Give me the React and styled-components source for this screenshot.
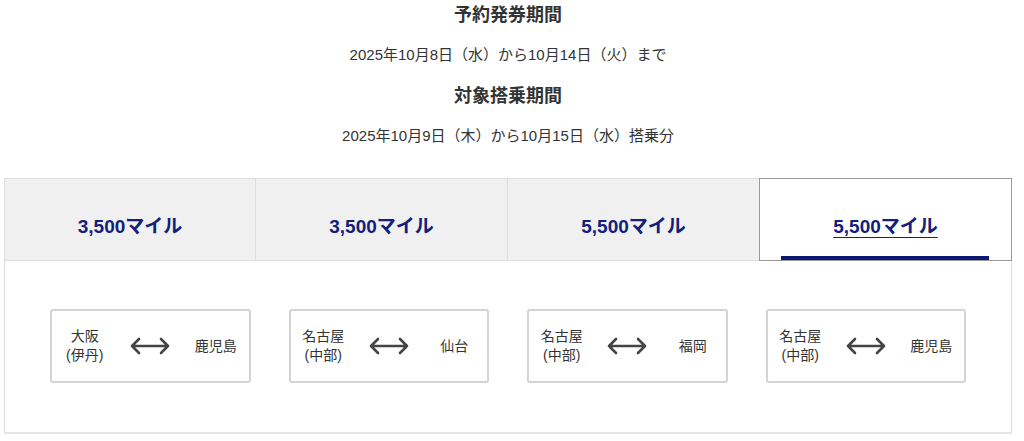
import React from "react";
import styled, { createGlobalStyle } from "styled-components";

const GlobalStyle = createGlobalStyle`
  body {
    margin: 0;
    background: #fff;
    font-family: "Liberation Sans", "Noto Sans CJK JP", sans-serif;
    color: #333;
  }
`;

const Page = styled.div`
  width: 1008px;
  margin-left: 4px;
`;

const Period = styled.div`
  display: flex;
  flex-direction: column;
  align-items: center;
  margin-bottom: 27px;
`;

const PeriodTitle = styled.div`
  font-size: 18px;
  font-weight: 700;
  line-height: 30px;
  margin-bottom: 10px;
  color: #333;
`;

const PeriodText = styled.div`
  font-size: 15px;
  line-height: 30px;
  margin-bottom: ${(p) => (p.$last ? "0" : "11px")};
  color: #333;
`;

const TabRow = styled.div`
  display: grid;
  grid-template-columns: repeat(4, 1fr);
`;

const Tab = styled.div`
  position: relative;
  height: 83px;
  box-sizing: border-box;
  padding-top: 10px;
  display: flex;
  align-items: center;
  justify-content: center;
  background: ${(p) => (p.$active ? "#fff" : "#f0f0f0")};
  border-top: 1px solid ${(p) => (p.$active ? "#999" : "#ddd")};
  border-bottom: 1px solid ${(p) => (p.$active ? "#999" : "#ddd")};
  border-right: 1px solid ${(p) => (p.$active ? "#999" : "#ddd")};
  border-left: ${(p) =>
    p.$active ? "1px solid #999" : p.$first ? "1px solid #ddd" : "none"};
  margin-left: ${(p) => (p.$active ? "-1px" : "0")};
  cursor: pointer;
`;

const TabLabel = styled.span`
  font-size: 19px;
  font-weight: 700;
  color: #13207a;
  text-decoration: ${(p) => (p.$active ? "underline" : "none")};
  text-decoration-thickness: 1px;
  text-underline-offset: 4px;
`;

const ActiveBar = styled.div`
  position: absolute;
  left: 21px;
  right: 22px;
  bottom: 0;
  height: 4px;
  background: #0b1770;
`;

const Panel = styled.div`
  border-left: 1px solid #ddd;
  border-right: 1px solid #ddd;
  border-bottom: 2px solid #e4e4e4;
  padding: 48px 45px 49px 45px;
  display: grid;
  grid-template-columns: repeat(4, 1fr);
  column-gap: 38px;
`;

const RouteCard = styled.div`
  height: 74px;
  box-sizing: border-box;
  border: 2px solid #d4d4d4;
  border-radius: 3px;
  display: grid;
  grid-template-columns: repeat(3, 1fr);
  align-items: center;
  text-align: center;
`;

const Airport = styled.div`
  font-size: 14px;
  line-height: 19px;
  color: #333;
  white-space: nowrap;
`;

const ArrowWrap = styled.div`
  display: flex;
  justify-content: center;
  align-items: center;
`;

const Arrow = () => (
  <svg width="42" height="18" viewBox="0 0 42 18" fill="none">
    <path
      d="M3 9 H39 M10 2 L3 9 L10 16 M32 2 L39 9 L32 16"
      stroke="#444"
      strokeWidth="2.6"
      strokeLinecap="round"
      strokeLinejoin="round"
    />
  </svg>
);

const tabs = ["3,500マイル", "3,500マイル", "5,500マイル", "5,500マイル"];

const routes = [
  { from: ["大阪", "(伊丹)"], to: "鹿児島" },
  { from: ["名古屋", "(中部)"], to: "仙台" },
  { from: ["名古屋", "(中部)"], to: "福岡" },
  { from: ["名古屋", "(中部)"], to: "鹿児島" },
];

const App = () => {
  const active = 3;
  return (
    <>
      <GlobalStyle />
      <Page>
        <Period>
          <PeriodTitle>予約発券期間</PeriodTitle>
          <PeriodText>2025年10月8日（水）から10月14日（火）まで</PeriodText>
          <PeriodTitle>対象搭乗期間</PeriodTitle>
          <PeriodText $last>2025年10月9日（木）から10月15日（水）搭乗分</PeriodText>
        </Period>
        <TabRow>
          {tabs.map((t, i) => (
            <Tab key={i} $active={i === active} $first={i === 0}>
              <TabLabel $active={i === active}>{t}</TabLabel>
              {i === active && <ActiveBar />}
            </Tab>
          ))}
        </TabRow>
        <Panel>
          {routes.map((r, i) => (
            <RouteCard key={i}>
              <Airport>
                {r.from[0]}
                <br />
                {r.from[1]}
              </Airport>
              <ArrowWrap>
                <Arrow />
              </ArrowWrap>
              <Airport>{r.to}</Airport>
            </RouteCard>
          ))}
        </Panel>
      </Page>
    </>
  );
};

export default App;
